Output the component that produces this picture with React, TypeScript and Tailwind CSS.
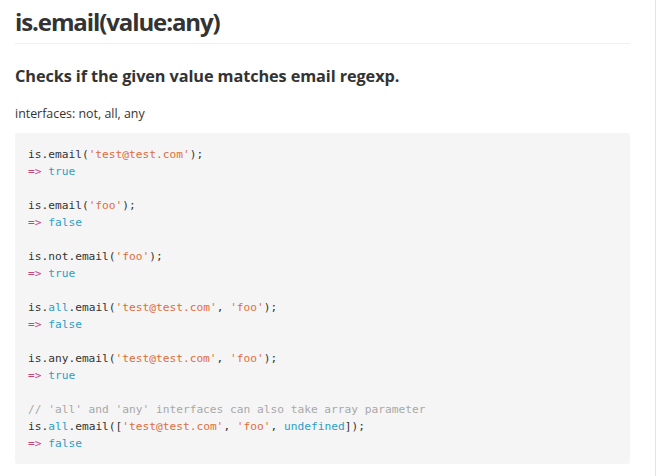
import React from "react";

const S = ({ children }: { children: React.ReactNode }) => (
  <span className="text-[#e06c3c]">{children}</span>
);
const K = ({ children }: { children: React.ReactNode }) => (
  <span className="text-[#2a9fc9]">{children}</span>
);
const Arrow = () => <span className="text-[#c9447f]">=&gt;</span>;

export default function App() {
  return (
    <div className="h-[476px] w-[658px] bg-white font-['Open_Sans',sans-serif] text-[#333]">
      <div className="h-full w-[656px] border-r border-[#e3e3e3] pl-[15px] pr-[25px]">
        <h1 className="pt-[7px] pb-[6px] text-[24px] font-bold leading-[30px] tracking-[-1.1px] text-[#333] border-b border-[#f0f0f0]">
          is.email(value:any)
        </h1>
        <h3 className="mt-[20px] text-[16.3px] font-bold leading-[24px] tracking-[-0.1px] text-[#333]">
          Checks if the given value matches email regexp.
        </h3>
        <p className="mt-[17px] text-[12.4px] leading-[18px] text-[#333]">
          interfaces: not, all, any
        </p>
        <pre className="mt-[10px] h-[331px] rounded-[3px] bg-[#f5f5f5] pl-[13px] pr-[14px] pt-[13px] font-['DejaVu_Sans_Mono',monospace] text-[11.2px] leading-[17px] text-[#333]">
          {"is.email("}<S>'test@test.com'</S>{");\n"}
          <Arrow /> <K>true</K>
          {"\n\nis.email("}<S>'foo'</S>{");\n"}
          <Arrow /> <K>false</K>
          {"\n\nis.not.email("}<S>'foo'</S>{");\n"}
          <Arrow /> <K>true</K>
          {"\n\nis."}<K>all</K>{".email("}<S>'test@test.com'</S>{", "}<S>'foo'</S>{");\n"}
          <Arrow /> <K>false</K>
          {"\n\nis.any.email("}<S>'test@test.com'</S>{", "}<S>'foo'</S>{");\n"}
          <Arrow /> <K>true</K>
          {"\n\n"}
          <span className="text-[#a8a8a8]">// 'all' and 'any' interfaces can also take array parameter</span>
          {"\nis."}<K>all</K>{".email(["}<S>'test@test.com'</S>{", "}<S>'foo'</S>{", "}<K>undefined</K>{"]);\n"}
          <Arrow /> <K>false</K>
        </pre>
      </div>
    </div>
  );
}
